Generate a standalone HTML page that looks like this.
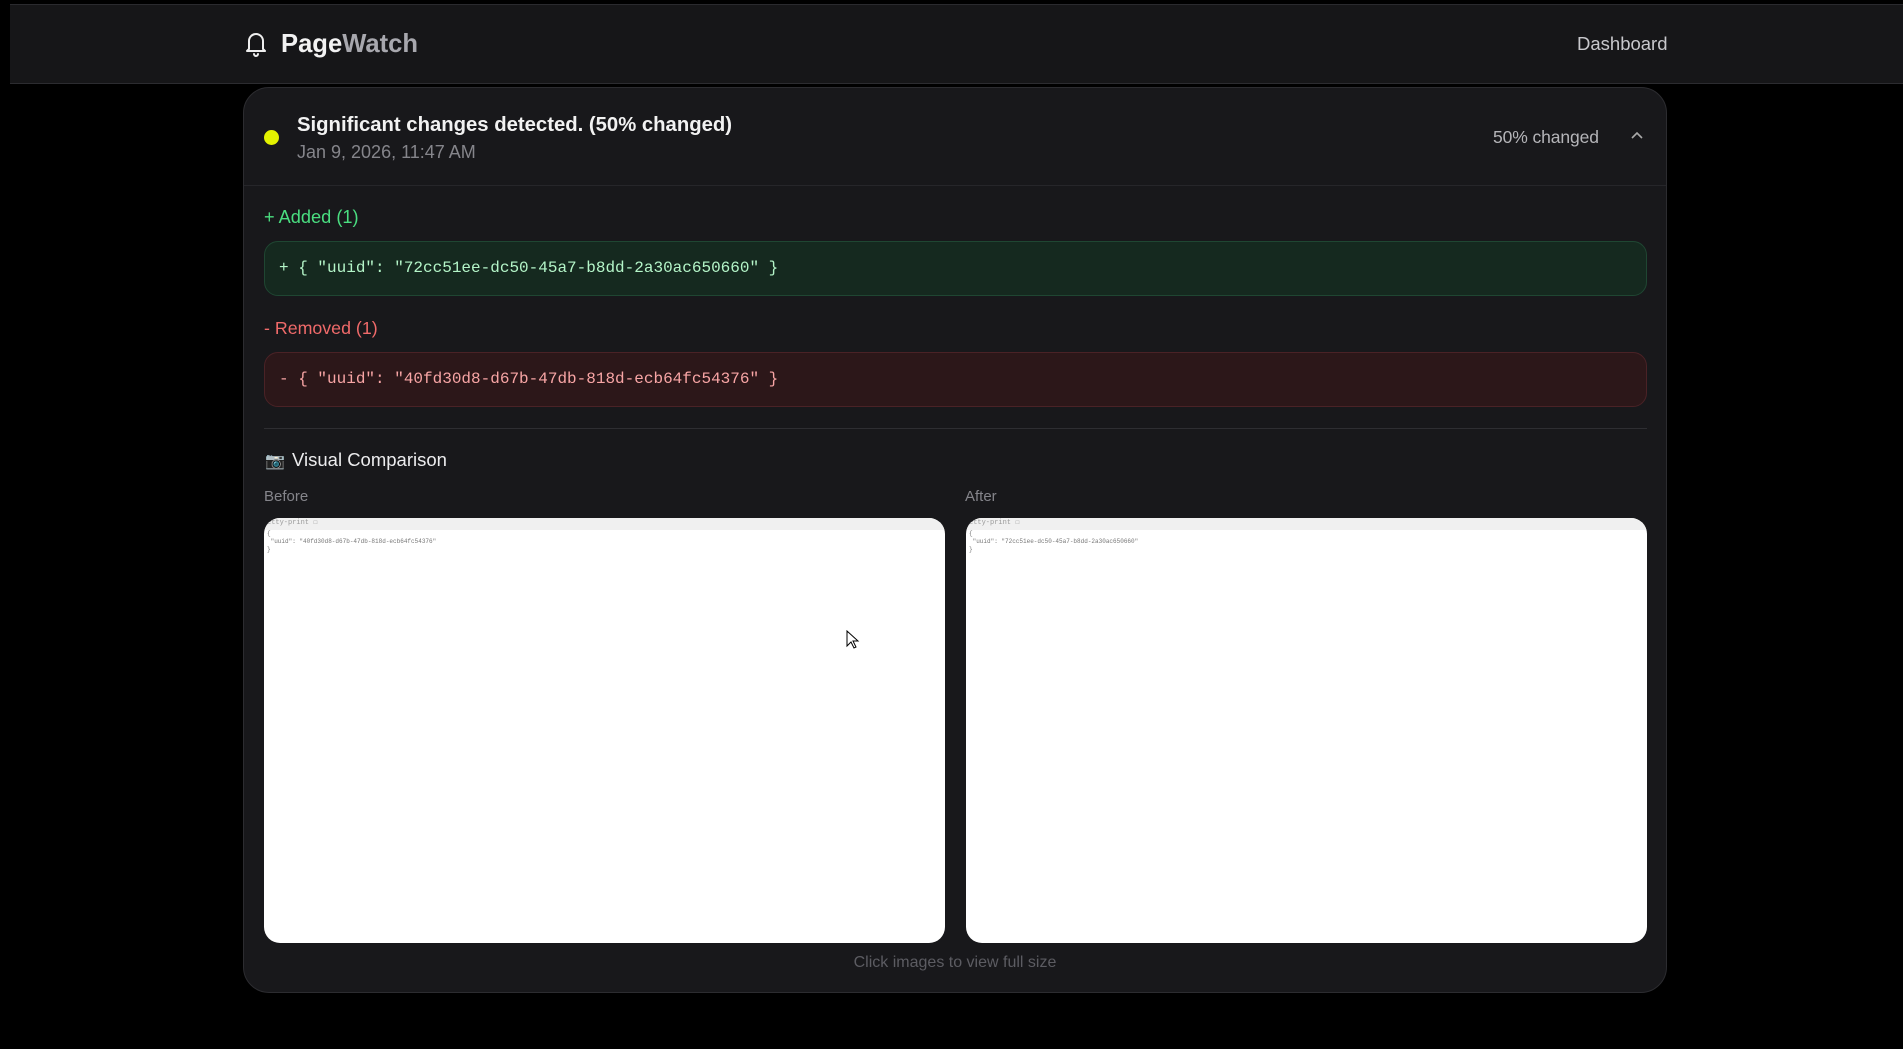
<!DOCTYPE html>
<html><head><meta charset="utf-8"><style>
*{box-sizing:border-box;margin:0;padding:0}
body{width:1903px;height:1049px;background:#000;font-family:"Liberation Sans",sans-serif;position:relative;overflow:hidden}
.hdr{position:absolute;left:10px;top:4px;width:1893px;height:80px;background:#161618;border-bottom:1px solid #2c2c30;border-top:1px solid #2a2a2e}
.abs{position:absolute;white-space:nowrap}
.card{position:absolute;left:243px;top:87px;width:1424px;height:906px;background:#18181b;border:1px solid #2c2c30;border-radius:26px}
.box{position:absolute;left:20px;width:1383px;height:55px;border-radius:14px;font-family:"Liberation Mono",monospace;font-size:16px;line-height:53px;padding-left:14px}
.img{position:absolute;top:430px;width:681px;height:425px;background:#fff;border-radius:16px;overflow:hidden}
.img .bar{height:12px;background:#f0f0f0;font-size:7px;color:#999;font-family:"Liberation Mono",monospace;padding-left:3px}
.img .t{font-family:"Liberation Mono",monospace;font-size:6px;color:#777;padding-left:3px;line-height:8px}
</style></head><body>
<div class="hdr"></div>
<svg class="abs" style="left:244px;top:30px" width="24" height="28" viewBox="0 0 24 28" fill="none" stroke="#eee" stroke-width="2" stroke-linecap="round" stroke-linejoin="round"><path d="M5 19V11a7 7 0 0 1 14 0v8l2 2H3z"/><path d="M10 24a2 2 0 0 0 4 0"/></svg>
<div class="abs" style="left:281px;top:30px;font-size:25.6px;font-weight:bold;color:#f2f2f2">Page<span style="color:#a8a8ae">Watch</span></div>
<div class="abs" style="left:1577px;top:33px;font-size:18.5px;color:#c8c8cc">Dashboard</div>
<div class="card">
 <div class="abs" style="left:20px;top:42px;width:15px;height:15px;border-radius:50%;background:#e3f200"></div>
 <div class="abs" style="left:53px;top:26px;font-size:20.3px;font-weight:bold;color:#f2f2f2">Significant changes detected. (50% changed)</div>
 <div class="abs" style="left:53px;top:54px;font-size:18px;color:#85858b">Jan 9, 2026, 11:47 AM</div>
 <div class="abs" style="left:1249px;top:39px;font-size:17.5px;color:#b4b4b8;letter-spacing:-0.1px">50% changed</div>
 <svg class="abs" style="left:1386px;top:43px" width="14" height="10" viewBox="0 0 14 10" fill="none" stroke="#aaa" stroke-width="1.6"><path d="M2 7l5-5 5 5"/></svg>
 <div class="abs" style="left:0;top:97px;width:1422px;height:1px;background:#26262a"></div>
 <div class="abs" style="left:20px;top:119px;font-size:18.2px;color:#4ade80">+ Added (1)</div>
 <div class="box" style="top:153px;background:#15291f;border:1px solid #1f4632;color:#b4f5c8">+ { "uuid": "72cc51ee-dc50-45a7-b8dd-2a30ac650660" }</div>
 <div class="abs" style="left:20px;top:230px;font-size:17.8px;color:#f06a6a">- Removed (1)</div>
 <div class="box" style="top:264px;background:#2c1719;border:1px solid #4a2226;color:#f8a5a5">- { "uuid": "40fd30d8-d67b-47db-818d-ecb64fc54376" }</div>
 <div class="abs" style="left:20px;top:340px;width:1383px;height:1px;background:#2e2e32"></div>
 <div class="abs" style="left:21px;top:363px;font-size:16px">📷</div>
 <div class="abs" style="left:48px;top:361px;font-size:18.5px;color:#ececee">Visual Comparison</div>
 <div class="abs" style="left:20px;top:400px;font-size:15px;color:#85858b">Before</div>
 <div class="abs" style="left:721px;top:400px;font-size:15px;color:#85858b">After</div>
 <div class="img" style="left:20px"><div class="bar">etty-print ☐</div><div class="t">{<br>&nbsp;"uuid": "40fd30d8-d67b-47db-818d-ecb64fc54376"<br>}</div></div>
 <div class="img" style="left:722px"><div class="bar">etty-print ☐</div><div class="t">{<br>&nbsp;"uuid": "72cc51ee-dc50-45a7-b8dd-2a30ac650660"<br>}</div></div>
 <div class="abs" style="left:0;width:1422px;text-align:center;top:866px;font-size:16px;color:#5c5c62">Click images to view full size</div>
</div>
<svg class="abs" style="left:846px;top:630px" width="14" height="20" viewBox="0 0 14 20"><path d="M1 1v15l4-4 3 6 2-1-3-6h5z" fill="#fff" stroke="#000" stroke-width="1"/></svg>
</body></html>
